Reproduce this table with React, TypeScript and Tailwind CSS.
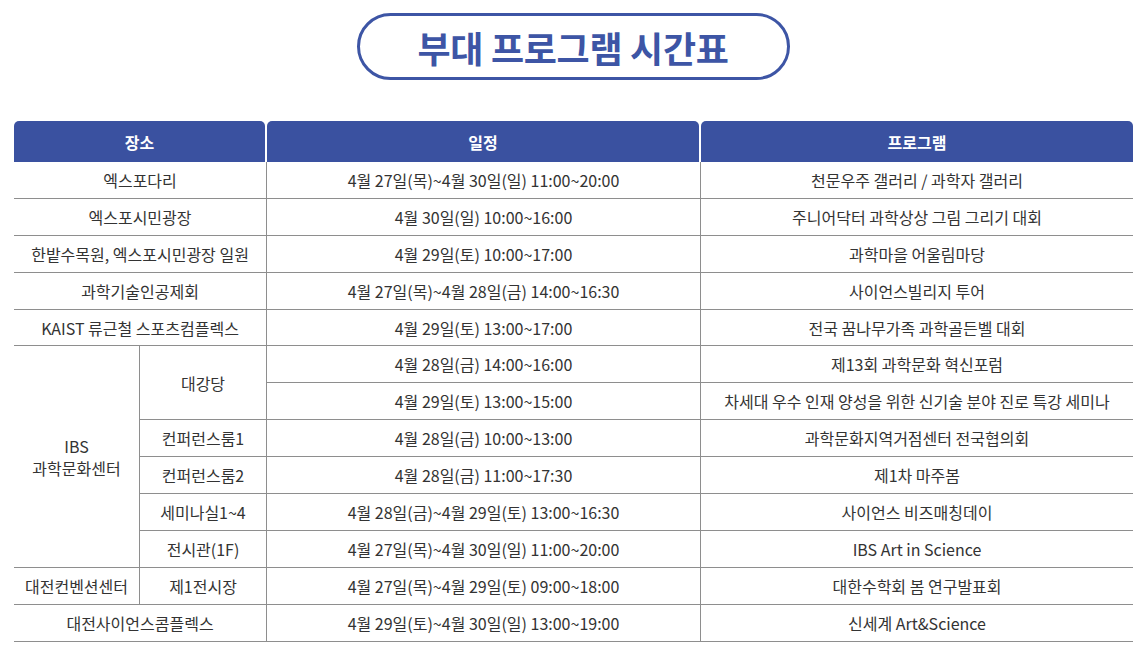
import React from 'react';

type Row = {
  place?: string;
  placeSpan?: number;
  sub?: string;
  subSpan?: number;
  full?: string;
  date: string;
  program: string;
};

const ROWS: Row[] = [
  { full: '엑스포다리', date: '4월 27일(목)~4월 30일(일) 11:00~20:00', program: '천문우주 갤러리 / 과학자 갤러리' },
  { full: '엑스포시민광장', date: '4월 30일(일) 10:00~16:00', program: '주니어닥터 과학상상 그림 그리기 대회' },
  { full: '한밭수목원, 엑스포시민광장 일원', date: '4월 29일(토) 10:00~17:00', program: '과학마을 어울림마당' },
  { full: '과학기술인공제회', date: '4월 27일(목)~4월 28일(금) 14:00~16:30', program: '사이언스빌리지 투어' },
  { full: 'KAIST 류근철 스포츠컴플렉스', date: '4월 29일(토) 13:00~17:00', program: '전국 꿈나무가족 과학골든벨 대회' },
  { place: 'IBS\n과학문화센터', placeSpan: 6, sub: '대강당', subSpan: 2, date: '4월 28일(금) 14:00~16:00', program: '제13회 과학문화 혁신포럼' },
  { date: '4월 29일(토) 13:00~15:00', program: '차세대 우수 인재 양성을 위한 신기술 분야 진로 특강 세미나' },
  { sub: '컨퍼런스룸1', date: '4월 28일(금) 10:00~13:00', program: '과학문화지역거점센터 전국협의회' },
  { sub: '컨퍼런스룸2', date: '4월 28일(금) 11:00~17:30', program: '제1차 마주봄' },
  { sub: '세미나실1~4', date: '4월 28일(금)~4월 29일(토) 13:00~16:30', program: '사이언스 비즈매칭데이' },
  { sub: '전시관(1F)', date: '4월 27일(목)~4월 30일(일) 11:00~20:00', program: 'IBS Art in Science' },
  { place: '대전컨벤션센터', placeSpan: 1, sub: '제1전시장', date: '4월 27일(목)~4월 29일(토) 09:00~18:00', program: '대한수학회 봄 연구발표회' },
  { full: '대전사이언스콤플렉스', date: '4월 29일(토)~4월 30일(일) 13:00~19:00', program: '신세계 Art&Science' },
];

const cell = 'border-b border-[#8e8e8e] text-center align-middle p-0';

export default function App() {
  return (
    <div
      className="w-[1144px] h-[654px] bg-white text-[#333] overflow-hidden"
      style={{ fontFamily: '"Noto Sans CJK KR", "Noto Sans", sans-serif' }}
    >
      {/* Title */}
      <div className="flex justify-center pt-[13px] pl-[2px]">
        <div className="w-[433px] h-[67px] rounded-full border-[3px] border-[#3d55a5] flex items-center justify-center">
          <span className="text-[36px] font-bold text-[#3d55a5] tracking-[-0.3px] leading-none">부대 프로그램 시간표</span>
        </div>
      </div>

      {/* Table */}
      <div className="pl-[14px] pt-[41px]">
        <table className="w-[1119px] table-fixed border-separate border-spacing-0 text-[16px]">
          <colgroup>
            <col className="w-[126px]" />
            <col className="w-[126px]" />
            <col className="w-[434px]" />
            <col className="w-[433px]" />
          </colgroup>
          <thead>
            <tr className="h-[41px]">
              <th colSpan={2} className="p-0 font-bold">
                <div className="h-[41px] mr-[1px] rounded-t-[5px] bg-[#3a51a0] text-white flex items-center justify-center">장소</div>
              </th>
              <th className="p-0 font-bold">
                <div className="h-[41px] ml-[1px] mr-[1px] rounded-t-[5px] bg-[#3a51a0] text-white flex items-center justify-center">일정</div>
              </th>
              <th className="p-0 font-bold">
                <div className="h-[41px] ml-[1px] rounded-t-[5px] bg-[#3a51a0] text-white flex items-center justify-center">프로그램</div>
              </th>
            </tr>
          </thead>
          <tbody>
            {ROWS.map((r, i) => (
              <tr key={i} className="h-[36.9px]">
                {r.full && (
                  <td colSpan={2} className={cell}>
                    {r.full}
                  </td>
                )}
                {r.place && (
                  <td rowSpan={r.placeSpan} className={`${cell} border-r whitespace-pre-line leading-[22px]`}>
                    {r.place}
                  </td>
                )}
                {r.sub && (
                  <td rowSpan={r.subSpan || 1} className={cell}>
                    {r.sub}
                  </td>
                )}
                <td className={`${cell} border-l`}>{r.date}</td>
                <td className={`${cell} border-l`}>{r.program}</td>
              </tr>
            ))}
          </tbody>
        </table>
      </div>
    </div>
  );
}
